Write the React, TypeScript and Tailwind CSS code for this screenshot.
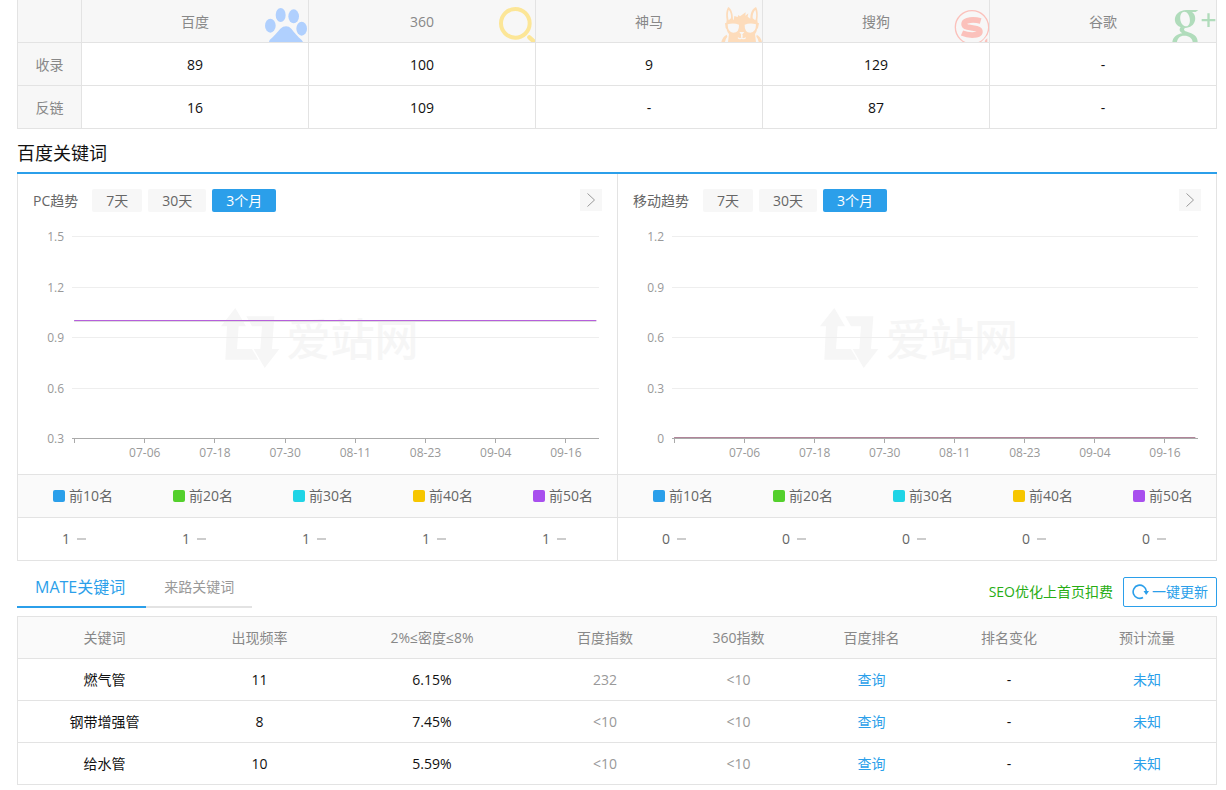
import React from 'react';

const engines = ['百度', '360', '神马', '搜狗', '谷歌'];

const indexRows = [
  { label: '收录', values: ['89', '100', '9', '129', '-'] },
  { label: '反链', values: ['16', '109', '-', '87', '-'] },
];

const ranges = ['7天', '30天', '3个月'];
const dates = ['07-06', '07-18', '07-30', '08-11', '08-23', '09-04', '09-16'];

const ranks = [
  { name: '前10名', color: 'bg-[#2b9fea]' },
  { name: '前20名', color: 'bg-[#54d02c]' },
  { name: '前30名', color: 'bg-[#20d4e6]' },
  { name: '前40名', color: 'bg-[#f7c600]' },
  { name: '前50名', color: 'bg-[#a84fee]' },
];

const keywordColumns = [
  { name: '关键词', width: 'w-[173px]' },
  { name: '出现频率', width: 'w-[137px]' },
  { name: '2%≤密度≤8%', width: 'w-[208px]' },
  { name: '百度指数', width: 'w-[138px]' },
  { name: '360指数', width: 'w-[129px]' },
  { name: '百度排名', width: 'w-[137px]' },
  { name: '排名变化', width: 'w-[138px]' },
  { name: '预计流量', width: 'w-[138px]' },
];

const keywords = [
  { word: '燃气管', count: '11', density: '6.15%', baidu: '232', so: '<10' },
  { word: '钢带增强管', count: '8', density: '7.45%', baidu: '<10', so: '<10' },
  { word: '给水管', count: '10', density: '5.59%', baidu: '<10', so: '<10' },
];

const PawIcon = () => (
  <svg className="absolute right-0 bottom-0" width="43" height="34" viewBox="0 0 129 102" fill="#b0d0fe" aria-hidden="true">
    <ellipse cx="16" cy="53" rx="16" ry="21" />
    <ellipse cx="47" cy="21" rx="15" ry="21" />
    <ellipse cx="86" cy="25" rx="16" ry="21" />
    <ellipse cx="110" cy="62" rx="16" ry="21" />
    <path d="M12 102 14 96C28 83 38 72 46 62Q54 55 63 55T79 62C87 73 97 84 110 96L114 102Z" />
  </svg>
);

const SearchRingIcon = () => (
  <svg className="absolute right-0 bottom-0" width="36" height="36" viewBox="0 0 108 108" fill="none" stroke="#fce697" aria-hidden="true">
    <circle cx="49" cy="52" r="43" strokeWidth="12" />
    <path d="M91 94 104 106" strokeWidth="13" strokeLinecap="round" />
  </svg>
);

const LlamaIcon = () => (
  <svg className="absolute right-0 bottom-0" width="41" height="36" viewBox="0 0 123 108" fill="#fddcbb" aria-hidden="true">
    <path d="M16 50 17 42C14 25 16 10 22 3 31 8 36 22 36 40L38 42 40 30 50 33 52 27 57 31 74 19 73 29 82 22 80 32 88 38C88 20 94 8 105 3 111 12 111 28 109 42L110 50 114 52 111 66 108 70C107 78 104 82 102 84L105 108H21L24 84C20 80 18 76 17 70L14 66 12 52Z" />
    <path d="M23 11C19 24 21 35 23 43L30 37C31 27 29 18 23 11ZM103 11C107 24 106 35 103 43L95 37C94 27 97 18 103 11Z" fill="#f7f7f7" />
    <path d="M20 55Q37 49 54 56 55 80 37 80 20 80 20 55ZM105 55Q88 49 71 56 70 80 88 80 105 80 105 55Z" fill="#f7f7f7" />
    <path d="M55 78H70L62 88ZM60 86H65V94H60ZM51 94Q57 99 62 94 68 99 74 94L75 97Q69 102 62 98 55 102 50 97Z" fill="#f7f7f7" />
    <path d="M17 86Q5 92 1 108H12Q14 97 19 92ZM107 86Q119 92 123 108H113Q111 97 106 92Z" />
  </svg>
);

const SogouIcon = () => (
  <svg className="absolute right-0 bottom-0" width="35" height="32" viewBox="0 0 105 96" fill="none" stroke="#fbc1bb" aria-hidden="true">
    <circle cx="54" cy="52" r="50" strokeWidth="4" />
    <path d="M80 33C66 29 50 29 40 32 27 36 27 48 40 51L68 56C82 60 80 72 68 74 50 77 36 74 24 69" strokeWidth="17" />
    <path d="M82 96 105 72V96Z" fill="#f7f7f7" stroke="none" />
    <path d="M94 90 100 85V96H92Z" fill="#fbc1bb" stroke="none" />
  </svg>
);

const GooglePlusIcon = () => (
  <svg className="absolute right-0 bottom-0" width="45" height="33" viewBox="0 0 135 99" fill="#b0dcbb" aria-hidden="true">
    <path
      fillRule="evenodd"
      d="M46 3H82L74 9H63C80 20 76 56 42 57 0 55 2 5 46 3ZM40 8C20 10 26 52 46 52 64 50 58 8 40 8Z"
    />
    <path d="M30 53 42 57C36 62 40 66 50 69 68 74 80 82 80 99H65C64 88 54 80 40 80 26 80 20 88 18 99H4C6 84 18 75 34 73 24 66 24 60 30 53Z" />
    <path d="M92 30H109V13H116V30H133V37H116V54H109V37H92Z" />
  </svg>
);

const engineIcons = [PawIcon, SearchRingIcon, LlamaIcon, SogouIcon, GooglePlusIcon];

const Watermark = () => (
  <div className="absolute inset-x-0 top-[96px] flex items-center justify-center gap-1.5 pl-1" aria-hidden="true">
    <svg width="60" height="61" viewBox="0 0 180 183" fill="#f6f6f6">
      <path d="M43 0 75 55H53L48 123H93L112 155H13L18 55H0Z" />
      <path d="M76 25H160L153 123H175L131 180 98 123H118L123 55H93Z" />
    </svg>
    <span className="text-[44px] leading-[60px] font-medium text-[#f6f6f6]">爱站网</span>
  </div>
);

type TrendProps = {
  title: string;
  ticks: string[];
  value: string;
  flat?: boolean;
};

const TrendPanel = ({ title, ticks, value, flat }: TrendProps) => (
  <section className="border-l border-[#e3e3e3] last:border-r">
    <div className="flex h-[38px] items-end px-[15px]">
      <h3 className="mr-3.5 leading-[23px] text-[#666]">{title}</h3>
      <div className="flex gap-1.5">
        {ranges.map((range, i) => (
          <button
            key={range}
            type="button"
            className={`h-[23px] rounded-xs px-3.5 ${i === 2 ? 'bg-[#2b9fea] text-white' : 'bg-[#f7f7f7] text-[#666]'}`}
          >
            {range}
          </button>
        ))}
      </div>
      <button type="button" aria-label="更多" className="mb-px ml-auto flex size-[22px] items-center justify-center bg-[#f7f7f7]">
        <svg width="8" height="14" viewBox="0 0 8 14" fill="none" stroke="#999">
          <path d="M.5.5 7.5 7 .5 13.5" />
        </svg>
      </button>
    </div>

    {/* Chart */}
    <div className="relative h-[262px] pr-[18px] pl-[54px]">
      <Watermark />
      <svg className="relative h-full w-full overflow-visible text-xs" fill="#999">
        {ticks.map((tick, i) => {
          const y = [24, 75, 125, 176, 226][i];
          return (
            <g key={tick}>
              <text x="-8" y={y + 5} textAnchor="end">{tick}</text>
              <line x1="0" x2="100%" y1={y + 0.5} y2={y + 0.5} stroke={i === 4 ? '#aaa' : '#eee'} />
            </g>
          );
        })}
        <line x1="0.5%" x2="0.5%" y1="227" y2="231" stroke="#aaa" shapeRendering="crispEdges" />
        {dates.map((date, i) => {
          const x = `${13.8 + i * 13.32}%`;
          return (
            <g key={date}>
              <line x1={x} x2={x} y1="227" y2="231" stroke="#aaa" shapeRendering="crispEdges" />
              <text x={x} y="245" textAnchor="middle">{date}</text>
            </g>
          );
        })}
        {flat ? (
          <line x1="0.4%" x2="99.5%" y1="225.5" y2="225.5" stroke="#b08499" />
        ) : (
          <>
            <line x1="0.4%" x2="99.5%" y1="109.5" y2="109.5" stroke="#ddd" />
            <line x1="0.4%" x2="99.5%" y1="108.5" y2="108.5" stroke="#b65fdb" />
          </>
        )}
      </svg>
    </div>

    <table className="w-full table-fixed border-separate border-spacing-0 text-left text-[#666]">
      <thead>
        <tr>
          {ranks.map((rank) => (
            <th key={rank.name} className="h-11 w-[120px] border-y border-[#e3e3e3] bg-[#fafafa] p-0 pl-[35px] font-normal whitespace-nowrap last:w-auto">
              <span className="flex items-center gap-1">
                <i className={`size-3 rounded-xs ${rank.color}`} />
                {rank.name}
              </span>
            </th>
          ))}
        </tr>
      </thead>
      <tbody>
        <tr>
          {ranks.map((rank) => (
            <td key={rank.name} className="h-[43px] border-b border-[#e3e3e3] p-0 pl-11">
              <span className="flex items-center gap-[7px]">
                {value}
                <i className="h-0.5 w-[9px] bg-[#ccc]" />
              </span>
            </td>
          ))}
        </tr>
      </tbody>
    </table>
  </section>
);

const App: React.FC = () => {
  return (
    <main className="bg-white pr-[9px] pl-[17px] font-['Open_Sans','Noto_Sans_CJK_SC',sans-serif] text-sm leading-5 text-[#111]">
      {/* Indexed pages per engine */}
      <table className="w-full table-fixed border-separate border-spacing-0 border-l border-[#e3e3e3] text-center">
        <thead>
          <tr className="bg-[#f7f7f7] text-[#888]">
            <th className="h-[43px] w-16 border-r border-b border-[#e3e3e3] p-0" />
            {engines.map((engine, i) => {
              const Icon = engineIcons[i];
              return (
                <th key={engine} className="relative border-r border-b border-[#e3e3e3] p-0 pt-0.5 font-normal">
                  {engine}
                  <Icon />
                </th>
              );
            })}
          </tr>
        </thead>
        <tbody>
          {indexRows.map((row) => (
            <tr key={row.label}>
              <th className="h-[43px] border-r border-b border-[#e3e3e3] bg-[#f7f7f7] p-0 pt-0.5 font-normal text-[#888]">{row.label}</th>
              {row.values.map((value, i) => (
                <td key={i} className="border-r border-b border-[#e3e3e3] p-0 pt-0.5">{value}</td>
              ))}
            </tr>
          ))}
        </tbody>
      </table>

      <h2 className="flex h-[45px] items-center border-b-2 border-[#2b9fea] pt-1 text-lg">百度关键词</h2>
      <div className="grid grid-cols-2">
        <TrendPanel title="PC趋势" ticks={['1.5', '1.2', '0.9', '0.6', '0.3']} value="1" />
        <TrendPanel title="移动趋势" ticks={['1.2', '0.9', '0.6', '0.3', '0']} value="0" flat />
      </div>

      {/* Tabs */}
      <div className="mb-2 flex items-end pt-3">
        <button type="button" className="h-[35px] border-b-2 border-[#2b9fea] pr-[21px] pb-1.5 pl-[18px] text-base text-[#2b9fea]">
          MATE关键词
        </button>
        <button type="button" className="h-[35px] border-b-2 border-[#e3e3e3] px-[18px] pb-1.5 text-[#999]">来路关键词</button>
        <a href="#" className="mr-2.5 ml-auto leading-8 text-[#27ad14]">SEO优化上首页扣费</a>
        <button type="button" className="mb-px flex h-[30px] items-center gap-[3px] rounded-xs border border-[#2b9fea] px-2 text-[#2b9fea]">
          <svg width="17" height="16" viewBox="0 0 17 16" fill="none" stroke="currentColor" strokeWidth="1.6">
            <path d="M11 13.5A6.6 6.6 0 1 1 14.3 7" />
            <path d="M11.5 7H17L14.2 11Z" fill="currentColor" stroke="none" />
          </svg>
          一键更新
        </button>
      </div>

      <table className="w-full table-fixed border-separate border-spacing-0 border border-b-0 border-[#e3e3e3] text-center">
        <thead>
          <tr className="bg-[#fafafa] text-[#888]">
            {keywordColumns.map((column) => (
              <th key={column.name} className={`h-[42px] border-b border-[#e3e3e3] p-0 font-normal ${column.width}`}>{column.name}</th>
            ))}
          </tr>
        </thead>
        <tbody className="[&_td]:h-[42px] [&_td]:border-b [&_td]:border-[#e3e3e3] [&_td]:p-0">
          {keywords.map((item) => (
            <tr key={item.word}>
              <td>{item.word}</td>
              <td>{item.count}</td>
              <td>{item.density}</td>
              <td className="text-[#999]">{item.baidu}</td>
              <td className="text-[#999]">{item.so}</td>
              <td><a href="#" className="text-[#2b9fea]">查询</a></td>
              <td>-</td>
              <td><a href="#" className="text-[#2b9fea]">未知</a></td>
            </tr>
          ))}
        </tbody>
      </table>
    </main>
  );
};

export default App;
